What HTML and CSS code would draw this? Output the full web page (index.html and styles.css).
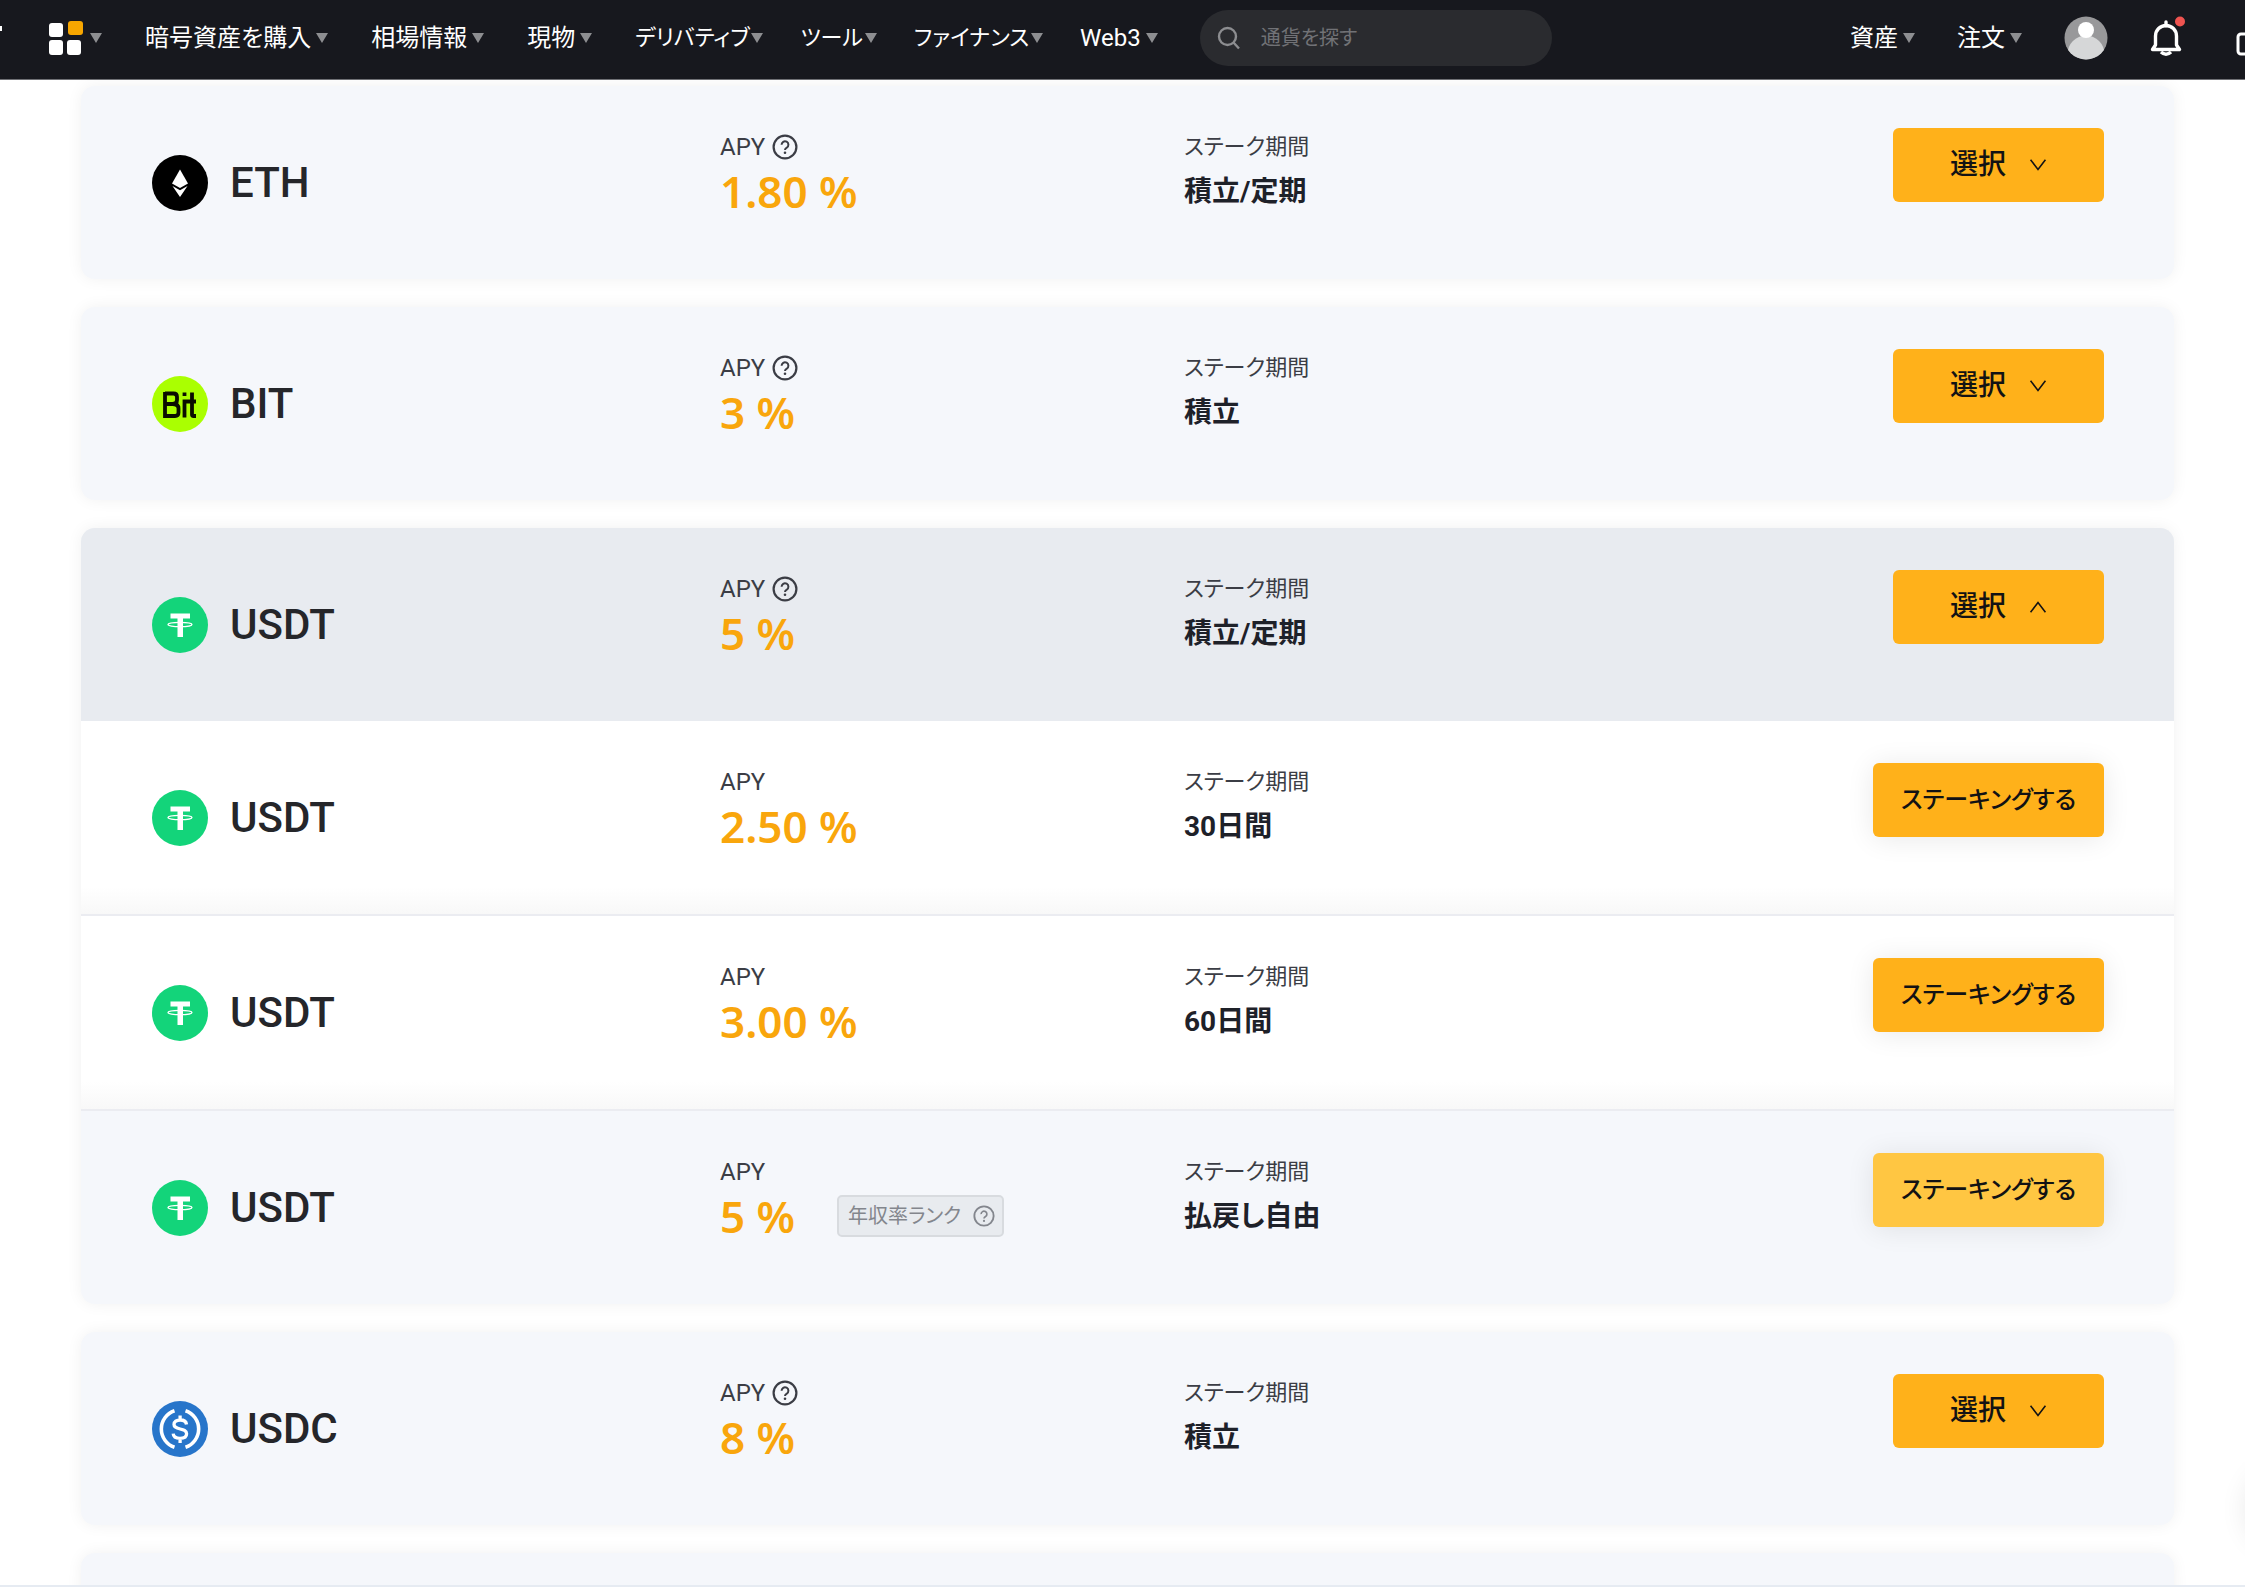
FILE: index.html
```html
<!DOCTYPE html>
<html lang="ja">
<head>
<meta charset="utf-8">
<meta name="viewport" content="width=device-width, initial-scale=1">
<title>ステーキング</title>
<link rel="stylesheet" href="styles.css">
</head>
<body>
<svg class="defs" aria-hidden="true">
  <symbol id="help" viewBox="0 0 26 26"><circle cx="13" cy="13" r="11.4" fill="none" stroke="currentColor" stroke-width="2.200"/><path d="M9.600 10.800a3.400 3.400 0 1 1 5.200 2.800c-1.200.7-1.800 1.200-1.800 2.400" fill="none" stroke="currentColor" stroke-width="2"/><circle cx="13" cy="18.800" r="1.300" fill="currentColor"/></symbol>
  <symbol id="chevron" viewBox="0 0 20 16"><path d="M1.500 2 10 13 18.500 2" fill="none" stroke="currentColor" stroke-width="1.800"/></symbol>
  <symbol id="eth" viewBox="0 0 56 56"><circle cx="28" cy="28" r="28"/><path d="M28 14.500 36 28.500 28 33 20 28.500Z" fill="#fff"/><path d="M20.500 31 28 35.300 35.500 31 28 42Z" fill="#fff"/></symbol>
  <symbol id="usdt" viewBox="0 0 56 56"><circle cx="28" cy="28" r="28" fill="#13d47a"/><path d="M18.500 16.500h19.500v5h-7v18.500h-5.500v-18.500h-7Z" fill="#fff"/><ellipse cx="28" cy="27.500" rx="12" ry="2.200" fill="none" stroke="#fff" stroke-width="1.300"/></symbol>
  <symbol id="bit" viewBox="0 0 56 56"><circle cx="28" cy="28" r="28" fill="#aaff01"/><path d="M13 17.500h8.500q3.500 0 3.500 3.500v3q0 4-4.500 4H13M20.500 28q6 0 6 4.500v4q0 3.500-3.500 3.500H13V16M32.500 41.500V25.500H44M40 16.500V38.500q0 1.500 1.500 1.500H44" fill="none" stroke="#0a0d00" stroke-width="3.800"/><path d="M30.600 16.500h3.800v3.500h-3.800z" fill="#0a0d00"/></symbol>
  <symbol id="usdc" viewBox="0 0 56 56"><circle cx="28" cy="28" r="28" fill="#2775ca"/><path d="M22.500 9.700a19.300 19.300 0 0 0 0 36.600M33.500 9.700a19.300 19.300 0 0 1 0 36.600" fill="none" stroke="#fff" stroke-width="3.600"/><path d="M34.500 23.500c-.3-3-2.800-4.500-6.300-4.500-3.700 0-6.200 1.700-6.200 4.500 0 6.300 12.600 2.700 12.600 9.300 0 2.900-2.600 4.600-6.600 4.600s-6.600-1.700-6.800-4.700M28.100 14.500V19M28.100 37.500V42" fill="none" stroke="#fff" stroke-width="3.300"/></symbol>
</svg>

<header class="topbar">
  <span class="logo-tail"></span>
  <nav class="nav">
    <a class="nav-link apps" href="#" aria-label="メニュー"><svg width="34" height="34" viewBox="0 0 34 34"><g fill="#fff"><rect y="2" width="14" height="14" rx="3"/><rect y="19" width="14" height="15" rx="3"/><rect x="18" y="19" width="14" height="15" rx="3"/></g><rect x="19" width="15" height="14" rx="3" fill="#f7a600"/></svg><i class="caret"></i></a>
    <a class="nav-link" href="#">暗号資産を購入<i class="caret"></i></a>
    <a class="nav-link" href="#">相場情報<i class="caret"></i></a>
    <a class="nav-link" href="#">現物<i class="caret"></i></a>
    <a class="nav-link kana" href="#">デリバティブ<i class="caret"></i></a>
    <a class="nav-link kana" href="#">ツール<i class="caret"></i></a>
    <a class="nav-link kana" href="#">ファイナンス<i class="caret"></i></a>
    <a class="nav-link" href="#">Web3<i class="caret"></i></a>
  </nav>
  <label class="search">
    <svg width="24" height="24" viewBox="0 0 24 24" fill="none" stroke="#8c8d90" stroke-width="2.400"><circle cx="10.500" cy="10.500" r="8.500"/><path d="M16.500 16.500 22 22.500"/></svg>
    <input type="search" placeholder="通貨を探す" aria-label="通貨を探す">
  </label>
  <div class="account">
    <a class="nav-link" href="#">資産<i class="caret"></i></a>
    <a class="nav-link" href="#">注文<i class="caret"></i></a>
    <a class="avatar" href="#" aria-label="アカウント"><svg width="44" height="44" viewBox="0 0 44 44"><clipPath id="face"><circle cx="22" cy="22" r="21.500"/></clipPath><g clip-path="url(#face)"><path d="M0 0h44v44H0z" fill="#98989a"/><circle cx="22" cy="38" r="18.500" fill="#d6d7d8"/><circle cx="22" cy="14" r="8" fill="#fff"/></g></svg></a>
    <a class="bell" href="#" aria-label="お知らせ"><svg width="36" height="44" viewBox="0 0 36 44" fill="none"><path d="M16 6v4M5.500 29V20a10.500 10.500 0 0 1 21 0v9l3 4.500H2.500Z" stroke="#fff" stroke-width="3.400" stroke-linejoin="round" stroke-linecap="round"/><path d="M11 36q5 4.500 10 0" stroke="#fff" stroke-width="3.500"/><circle cx="30" cy="5.500" r="5" fill="#ef5350"/></svg></a>
    <a class="more" href="#" aria-label="ダウンロード"><svg width="24" height="24" viewBox="0 0 24 24" fill="none" stroke="#fff" stroke-width="3"><rect x="2" y="2" width="20" height="20" rx="3"/></svg></a>
  </div>
</header>

<main class="list">
  <section class="card">
    <div class="row">
      <h2 class="coin"><svg><use href="#eth"/></svg>ETH</h2>
      <div class="cell"><span class="label">APY<svg class="help"><use href="#help"/></svg></span><span class="rate">1.80 %</span></div>
      <div class="cell"><span class="label kana">ステーク期間</span><span class="term">積立/定期</span></div>
      <button class="btn select">選択<svg><use href="#chevron"/></svg></button>
    </div>
  </section>
  <section class="card">
    <div class="row">
      <h2 class="coin"><svg><use href="#bit"/></svg>BIT</h2>
      <div class="cell"><span class="label">APY<svg class="help"><use href="#help"/></svg></span><span class="rate">3 %</span></div>
      <div class="cell"><span class="label kana">ステーク期間</span><span class="term">積立</span></div>
      <button class="btn select">選択<svg><use href="#chevron"/></svg></button>
    </div>
  </section>
  <section class="card">
    <div class="row head">
      <h2 class="coin"><svg><use href="#usdt"/></svg>USDT</h2>
      <div class="cell"><span class="label">APY<svg class="help"><use href="#help"/></svg></span><span class="rate">5 %</span></div>
      <div class="cell"><span class="label kana">ステーク期間</span><span class="term">積立/定期</span></div>
      <button class="btn select expanded" aria-expanded="true">選択<svg><use href="#chevron"/></svg></button>
    </div>
    <div class="row plan">
      <h3 class="coin"><svg><use href="#usdt"/></svg>USDT</h3>
      <div class="cell"><span class="label">APY</span><span class="rate">2.50 %</span></div>
      <div class="cell"><span class="label kana">ステーク期間</span><span class="term">30日間</span></div>
      <button class="btn stake">ステーキングする</button>
    </div>
    <div class="row plan">
      <h3 class="coin"><svg><use href="#usdt"/></svg>USDT</h3>
      <div class="cell"><span class="label">APY</span><span class="rate">3.00 %</span></div>
      <div class="cell"><span class="label kana">ステーク期間</span><span class="term">60日間</span></div>
      <button class="btn stake">ステーキングする</button>
    </div>
    <div class="row">
      <h3 class="coin"><svg><use href="#usdt"/></svg>USDT</h3>
      <div class="cell"><span class="label">APY</span><span class="rate">5 %<span class="rank">年収率ランク<svg><use href="#help"/></svg></span></span></div>
      <div class="cell"><span class="label kana">ステーク期間</span><span class="term">払戻し自由</span></div>
      <button class="btn stake active">ステーキングする</button>
    </div>
  </section>
  <section class="card">
    <div class="row">
      <h2 class="coin"><svg><use href="#usdc"/></svg>USDC</h2>
      <div class="cell"><span class="label">APY<svg class="help"><use href="#help"/></svg></span><span class="rate">8 %</span></div>
      <div class="cell"><span class="label kana">ステーク期間</span><span class="term">積立</span></div>
      <button class="btn select">選択<svg><use href="#chevron"/></svg></button>
    </div>
  </section>
  <section class="card"><div class="row"></div></section>
</main>
<div class="float"></div>
<div class="statusline"></div>
</body>
</html>
```

FILE: styles.css
```css
* { box-sizing: border-box; }

body {
  margin: 0;
  height: 100vh;
  overflow: hidden;
  display: flex;
  flex-direction: column;
  background: #fff;
  color: #121214;
  font-family: Roboto, "Noto Sans CJK JP", sans-serif;
  font-feature-settings: "palt";
}

.defs { position: absolute; width: 0; height: 0; }
a { color: inherit; text-decoration: none; }
svg { flex: none; display: block; }

.topbar {
  flex: none;
  height: 80px;
  padding-bottom: 4px;
  display: flex;
  align-items: center;
  background: #17181e;
  border-bottom: 1px solid #6f7075;
  color: #fff;
  font-size: 24px;
  line-height: 36px;
}
.logo-tail { width: 2px; height: 5px; margin-right: 47px; margin-bottom: 18px; background: #fff; }
.nav { display: flex; gap: 43px; }
.nav-link { display: flex; align-items: center; gap: 5px; white-space: nowrap; }
.nav-link.kana { font-size: 22px; gap: 2px; margin-right: -6px; }
.nav-link.apps { gap: 7px; }
.caret {
  border: 6px solid transparent;
  border-top: 10px solid #8d8e91;
  border-bottom: 0;
}
.search {
  width: 352px;
  height: 56px;
  margin-left: 42px;
  padding: 0 17px;
  display: flex;
  align-items: center;
  gap: 20px;
  border-radius: 28px;
  background: #2a2b2f;
}
.search input {
  width: 100%;
  border: 0;
  padding: 0;
  outline: 0;
  background: none;
  color: #fff;
  font: inherit;
  font-size: 20px;
}
.search input::placeholder { color: #717276; opacity: 1; }
.account { margin-left: auto; display: flex; align-items: center; gap: 42px; margin-right: -15px; }
.bell { margin-right: 8px; }
.more { margin-top: 12px; }

.list {
  flex: 1;
  min-height: 0;
  overflow: hidden;
  padding: 6px 71px 0 81px;
  display: flex;
  flex-direction: column;
  gap: 28px;
}
.card {
  flex: none;
  border-radius: 14px;
  background: #f5f7fb;
  box-shadow: 0 0 16px rgba(0, 0, 0, .06);
}
.row {
  min-height: 193px;
  padding: 42px 70px 42px 71px;
  display: grid;
  grid-template-columns: 568fr 464fr 600fr 320fr;
  align-items: start;
}
.head { border-radius: 14px 14px 0 0; background: #e8ebf0; }
.plan { min-height: 195px; border-bottom: 2px solid #ebecf1; background: linear-gradient(#fff 86%, #f8f8f8); }

.coin {
  margin: 0;
  align-self: center;
  display: flex;
  align-items: center;
  gap: 22px;
  font-size: 42px;
  line-height: 56px;
  font-weight: 500;
  color: #25262a;
}
.coin svg { width: 56px; height: 56px; }
.cell { display: flex; flex-direction: column; }
.label {
  display: flex;
  align-items: center;
  gap: 7px;
  font-size: 24px;
  line-height: 38px;
  color: #3b3d45;
}
.label.kana { font-size: 22px; }
.help { width: 26px; height: 26px; }
.rate {
  display: flex;
  align-items: center;
  gap: 42px;
  height: 50px;
  font-family: "Noto Sans", sans-serif;
  font-size: 44px;
  line-height: 50px;
  font-weight: 600;
  color: #f9a60c;
}
.term { font-size: 28px; line-height: 52px; font-weight: 700; color: #1e2129; }
.rank {
  height: 42px;
  padding: 0 7px 0 9px;
  display: flex;
  align-items: center;
  gap: 12px;
  border: 2px solid #d8dbdf;
  border-radius: 5px;
  background: #e8ebef;
  color: #83868d;
  font: 400 20px/30px Roboto, "Noto Sans CJK JP", sans-serif;
  font-feature-settings: "palt";
}
.rank svg { width: 22px; height: 22px; }

.btn {
  justify-self: end;
  height: 74px;
  border: 0;
  padding: 0;
  display: flex;
  align-items: center;
  justify-content: center;
  border-radius: 6px;
  background: #ffb11a;
  color: #121214;
  font: 500 28px/40px Roboto, "Noto Sans CJK JP", sans-serif;
  font-feature-settings: "palt";
  white-space: nowrap;
}
.select { width: 211px; gap: 23px; }
.select svg { width: 18px; height: 14px; }
.expanded svg { transform: rotate(180deg); }
.stake { width: 231px; font-size: 24px; box-shadow: 0 2px 28px rgba(0, 0, 0, .09); }
.active { background: #ffc642; }

.float {
  position: fixed;
  right: -84px;
  bottom: 38px;
  width: 80px;
  height: 80px;
  border-radius: 50%;
  box-shadow: 0 0 30px rgba(0, 0, 0, .12);
}
.statusline { position: fixed; left: 0; right: 0; bottom: 0; height: 2px; background: #e6ebf2; }
```
